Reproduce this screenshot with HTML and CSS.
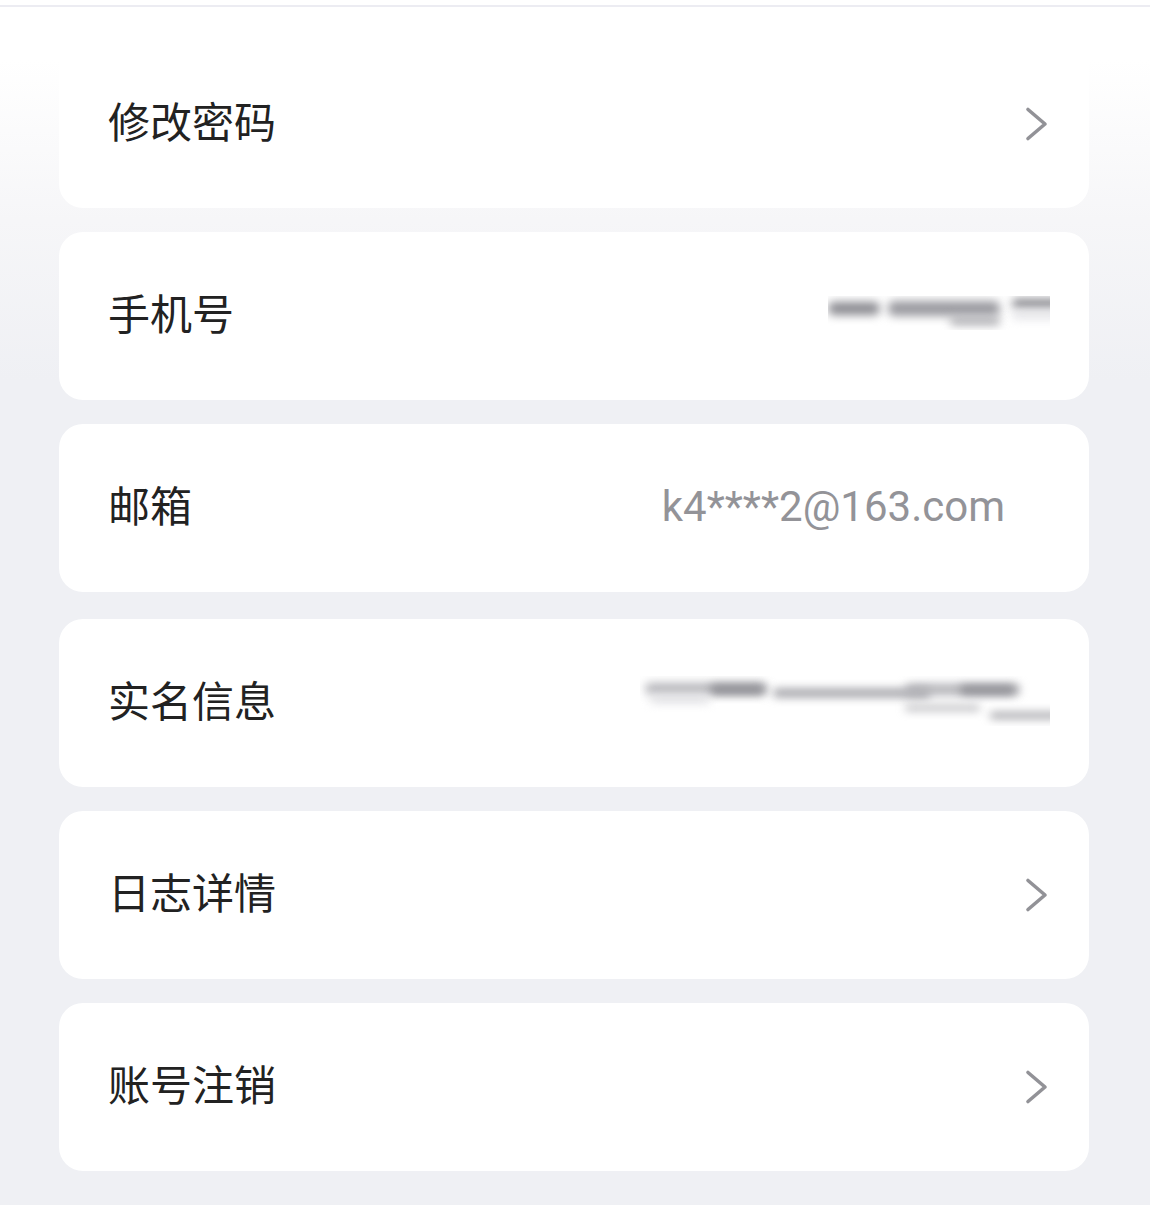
FILE: index.html
```html
<!DOCTYPE html>
<html lang="zh-CN">
<head>
<meta charset="utf-8">
<title>账号设置</title>
<link rel="stylesheet" href="styles.css">
</head>
<body>
<div class="topbar"></div>
<main class="list">
  <div class="row">
    <span class="label">修改密码</span>
    <svg class="chev" width="24" height="36" viewBox="0 0 24 36"><polyline points="4,3.5 21,18 4,32.5" fill="none" stroke="#929297" stroke-width="3.6" stroke-linecap="round" stroke-linejoin="round"/></svg>
  </div>
  <div class="row">
    <span class="label">手机号</span>
    <div class="blur blur-phone">
      <i style="left:0;top:6px;width:52px;height:13px;background:#8a8a90"></i>
      <i style="left:60px;top:5px;width:112px;height:15px;background:#9a9aa0"></i>
      <i style="left:122px;top:21px;width:50px;height:8px;background:#a8a8ad"></i>
      <i style="left:184px;top:3px;width:50px;height:9px;background:#808086"></i>
      <i style="left:184px;top:15px;width:50px;height:8px;background:#e2e2e6"></i>
    </div>
  </div>
  <div class="row">
    <span class="label">邮箱</span>
    <span class="value">k4****2@163.com</span>
  </div>
  <div class="row row-wide">
    <span class="label">实名信息</span>
    <div class="blur blur-name">
      <i style="left:5px;top:7px;width:122px;height:11px;background:#b4b4b9"></i>
      <i style="left:70px;top:9px;width:55px;height:9px;background:#86868c"></i>
      <i style="left:10px;top:20px;width:60px;height:7px;background:#dcdce0"></i>
      <i style="left:133px;top:13px;width:157px;height:8px;background:#98989e"></i>
      <i style="left:265px;top:8px;width:115px;height:11px;background:#b0b0b5"></i>
      <i style="left:320px;top:10px;width:55px;height:8px;background:#86868c"></i>
      <i style="left:265px;top:30px;width:75px;height:4px;background:#98989e"></i>
      <i style="left:350px;top:37px;width:70px;height:5px;background:#86868c"></i>
    </div>
  </div>
  <div class="row">
    <span class="label">日志详情</span>
    <svg class="chev" width="24" height="36" viewBox="0 0 24 36"><polyline points="4,3.5 21,18 4,32.5" fill="none" stroke="#929297" stroke-width="3.6" stroke-linecap="round" stroke-linejoin="round"/></svg>
  </div>
  <div class="row">
    <span class="label">账号注销</span>
    <svg class="chev" width="24" height="36" viewBox="0 0 24 36"><polyline points="4,3.5 21,18 4,32.5" fill="none" stroke="#929297" stroke-width="3.6" stroke-linecap="round" stroke-linejoin="round"/></svg>
  </div>
</main>
</body>
</html>
```
FILE: styles.css
```css
html, body {
  margin: 0;
  padding: 0;
}
body {
  width: 1150px;
  min-height: 1205px;
  background: linear-gradient(to bottom, #ffffff 0px, #ffffff 60px, #f6f6f8 220px, #eff0f4 380px, #eff0f4 100%);
  font-family: "Noto Sans CJK SC", "Noto Sans", sans-serif;
}
.topbar {
  height: 5px;
  background: #ffffff;
  border-bottom: 2px solid #ececf2;
}
.list {
  display: flex;
  flex-direction: column;
  gap: 24px;
  padding: 33px 61px 0 59px;
}
.row {
  height: 168px;
  box-sizing: border-box;
  background: #ffffff;
  border-radius: 24px;
  display: flex;
  align-items: center;
  padding: 0 41px 0 49px;
}
.row-wide {
  margin-top: 3px;
}
.label {
  flex: 1;
  font-size: 42px;
  color: #222222;
  line-height: 1;
  margin-top: -9px;
}
.value {
  font-family: Roboto, "Liberation Sans", sans-serif;
  font-size: 42px;
  color: #939398;
  margin-right: 43px;
  line-height: 1;
  margin-top: -2px;
}
.chev {
  display: block;
}
.blur {
  position: relative;
  overflow: hidden;
  margin-right: -2px;
}
.blur i {
  position: absolute;
  display: block;
  border-radius: 6px;
  filter: blur(5px);
}
.blur-phone {
  width: 222px;
  height: 34px;
  margin-top: -6px;
}
.blur-name {
  width: 410px;
  height: 50px;
  margin-top: -4px;
}
```
